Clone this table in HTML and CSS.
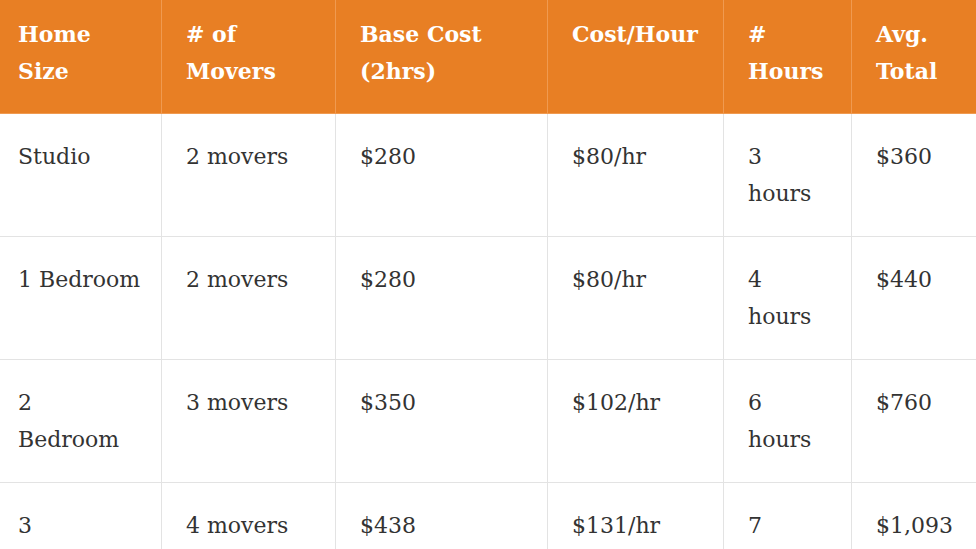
FILE: index.html
```html
<!DOCTYPE html>
<html>
<head>
<meta charset="utf-8">
<link rel="stylesheet" href="styles.css">
</head>
<body>
<div class="wrap">
<table class="rates">
  <colgroup>
    <col class="c1"><col class="c2"><col class="c3"><col class="c4"><col class="c5"><col class="c6">
  </colgroup>
  <thead>
    <tr><th>Home Size</th><th># of Movers</th><th>Base Cost (2hrs)</th><th>Cost/Hour</th><th># Hours</th><th>Avg. Total</th></tr>
  </thead>
  <tbody>
    <tr><td>Studio</td><td>2 movers</td><td>$280</td><td>$80/hr</td><td>3 hours</td><td>$360</td></tr>
    <tr><td><span class="nowrap">1 Bedroom</span></td><td>2 movers</td><td>$280</td><td>$80/hr</td><td>4 hours</td><td>$440</td></tr>
    <tr><td>2 Bedroom</td><td>3 movers</td><td>$350</td><td>$102/hr</td><td>6 hours</td><td>$760</td></tr>
    <tr><td>3 Bedroom</td><td>4 movers</td><td>$438</td><td>$131/hr</td><td>7 hours</td><td>$1,093</td></tr>
  </tbody>
</table>
</div>
</body>
</html>
```
FILE: styles.css
```css
html, body {
  margin: 0;
  padding: 0;
  background: #ffffff;
}
.wrap {
  width: 976px;
  height: 549px;
  overflow: hidden;
}
.rates {
  border-collapse: collapse;
  table-layout: fixed;
  width: 1000px;
  margin-left: -6px;
  font-family: "DejaVu Serif", "Liberation Serif", serif;
  font-size: 22px;
  line-height: 37px;
  color: #333333;
}
.c1 { width: 167px; }
.c2 { width: 174px; }
.c3 { width: 212px; }
.c4 { width: 176px; }
.c5 { width: 128px; }
.c6 { width: 143px; }
.rates th {
  background: #e87f24;
  color: #ffffff;
  font-weight: bold;
  text-align: left;
  vertical-align: top;
  padding: 16px 24px 23px;
  border: 1px solid #f09a50;
  border-top: none;
}
.rates td {
  text-align: left;
  vertical-align: top;
  padding: 24px 24px 24px;
  border: 1px solid #e3e3e3;
  height: 74px;
}
.rates th:first-child,
.rates td:first-child {
  padding-left: 23px;
}
.nowrap {
  white-space: nowrap;
}
```
